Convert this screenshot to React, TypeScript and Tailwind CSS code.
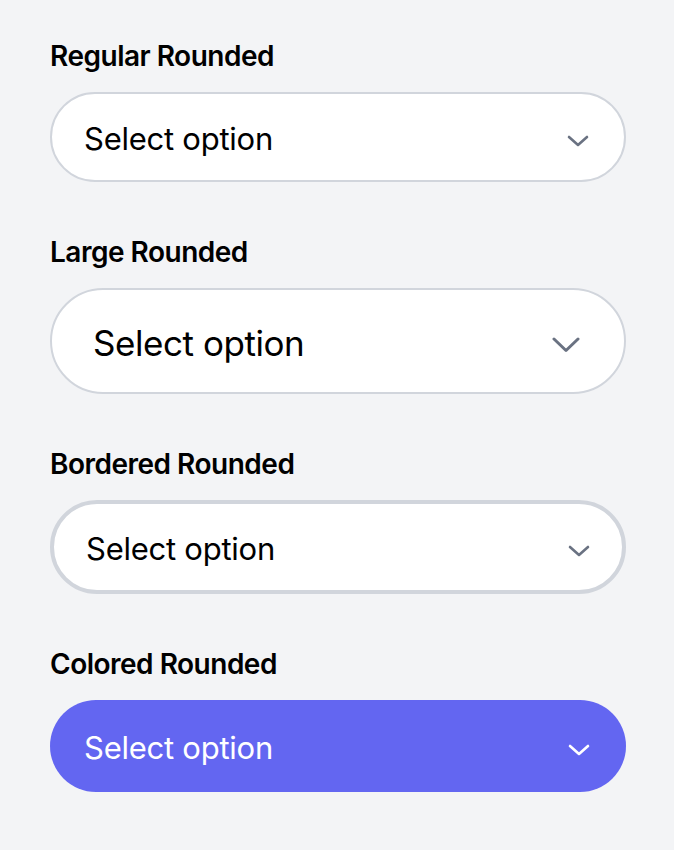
type Variant = "regular" | "large" | "bordered" | "colored";

const variants: { label: string; variant: Variant }[] = [
  { label: "Regular Rounded", variant: "regular" },
  { label: "Large Rounded", variant: "large" },
  { label: "Bordered Rounded", variant: "bordered" },
  { label: "Colored Rounded", variant: "colored" },
];

function Chevron({ large, light }: { large?: boolean; light?: boolean }) {
  const color = light ? "text-white" : "text-gray-500";
  if (large) {
    return (
      <svg
        viewBox="0 0 28 16"
        className={`h-[16px] w-[28px] translate-y-[4px] ${color}`}
        fill="none"
        stroke="currentColor"
        strokeWidth={3}
        strokeLinecap="round"
        strokeLinejoin="round"
      >
        <polyline points="2,2 14,13.5 26,2" />
      </svg>
    );
  }
  return (
    <svg
      viewBox="0 0 22 12"
      className={`h-[12px] w-[22px] translate-y-[4px] ${color}`}
      fill="none"
      stroke="currentColor"
      strokeWidth={2.6}
      strokeLinecap="round"
      strokeLinejoin="round"
    >
      <polyline points="2,2 11,10 20,2" />
    </svg>
  );
}

function RoundedSelect({ variant }: { variant: Variant }) {
  if (variant === "large") {
    return (
      <div className="flex h-[106px] items-center justify-between rounded-full border-2 border-gray-300 bg-white pl-[41px] pr-[44px] text-[35px] tracking-[-0.45px] text-black">
        <span className="translate-y-[2px]">Select option</span>
        <Chevron large />
      </div>
    );
  }
  if (variant === "bordered") {
    return (
      <div className="flex h-[94px] items-center justify-between rounded-full border-4 border-gray-300 bg-white pl-[32px] pr-[32px] text-[31px] tracking-[-0.25px] text-black">
        <span className="translate-y-[2px]">Select option</span>
        <Chevron />
      </div>
    );
  }
  if (variant === "colored") {
    return (
      <div className="flex h-[92px] items-center justify-between rounded-full border-2 border-transparent bg-[#6366f1] pl-[32px] pr-[34px] text-[31px] tracking-[-0.25px] text-white">
        <span className="translate-y-[2px]">Select option</span>
        <Chevron light />
      </div>
    );
  }
  return (
    <div className="flex h-[90px] items-center justify-between rounded-full border-2 border-gray-300 bg-white pl-[32px] pr-[35px] text-[31px] tracking-[-0.25px] text-black">
      <span className="translate-y-[2px]">Select option</span>
      <Chevron />
    </div>
  );
}

export default function App() {
  return (
    <div className="min-h-[850px] w-full bg-gray-100 font-['Inter',_'Liberation_Sans',_sans-serif]">
      <div className="ml-[50px] flex w-[576px] flex-col gap-[50px] pt-[36px]">
        {variants.map(({ label, variant }) => (
          <div key={variant} className="flex flex-col gap-[16px]">
            <label className="text-[28px] font-semibold leading-[40px] tracking-[-0.5px] text-black">
              {label}
            </label>
            <RoundedSelect variant={variant} />
          </div>
        ))}
      </div>
    </div>
  );
}
